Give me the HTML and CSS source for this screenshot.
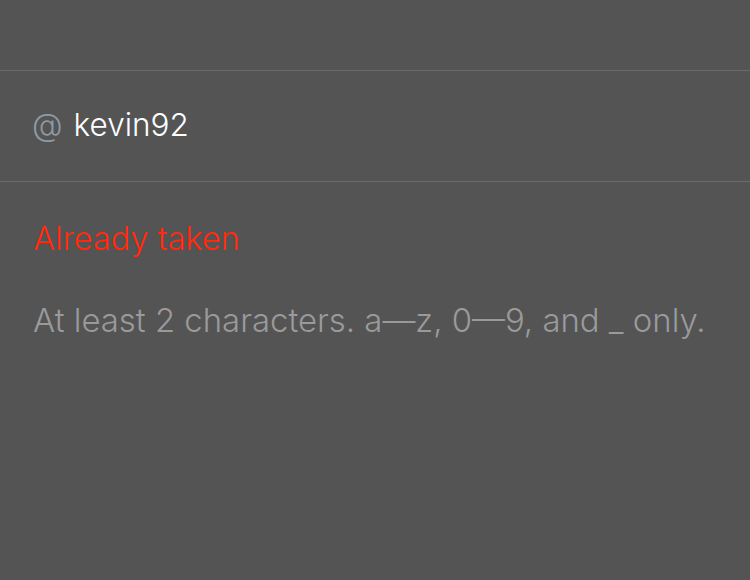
FILE: index.html
```html
<!DOCTYPE html>
<html>
<head>
<meta charset="utf-8">
<link rel="stylesheet" href="styles.css">
</head>
<body>
<div class="screen">
  <div class="top"></div>
  <div class="field">
    <span class="at">@</span>
    <span class="value">kevin92</span>
  </div>
  <div class="messages">
    <div class="error">Already taken</div>
    <div class="hint">At least 2 characters. a—z, 0—9, and _ only.</div>
  </div>
</div>
</body>
</html>
```

FILE: styles.css
```css
html, body {
  margin: 0;
  padding: 0;
  background: #545454;
}
body {
  font-family: Inter, "Noto Sans", sans-serif;
  font-weight: 350;
  width: 750px;
  height: 580px;
  overflow: hidden;
}
.screen {
  display: flex;
  flex-direction: column;
}
.top {
  height: 70px;
  border-bottom: 1px solid #6b6b6b;
}
.field {
  box-sizing: border-box;
  height: 111px;
  padding-bottom: 4px;
  border-bottom: 1px solid #6b6b6b;
  display: flex;
  align-items: center;
  gap: 11px;
  padding-left: 32px;
  font-size: 31.5px;
}
.at {
  color: #8f9aa2;
}
.value {
  color: #ffffff;
}
.messages {
  padding: 38px 33px 0;
  display: flex;
  flex-direction: column;
  gap: 43px;
  line-height: 38px;
}
.error {
  color: #ff2a0d;
  font-size: 32.5px;
}
.hint {
  color: #9a9a9a;
  font-size: 32.9px;
}
```
